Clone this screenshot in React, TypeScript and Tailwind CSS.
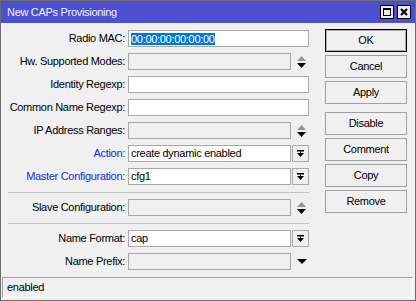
type Row = {
  label: string;
  blue?: boolean;
  value?: string;
  selected?: boolean;
  disabled?: boolean;
  tail?: "updown" | "drop" | "down";
};

const topRows: Row[] = [
  { label: "Radio MAC:", value: "00:00:00:00:00:00", selected: true },
  { label: "Hw. Supported Modes:", disabled: true, tail: "updown" },
  { label: "Identity Regexp:" },
  { label: "Common Name Regexp:" },
  { label: "IP Address Ranges:", disabled: true, tail: "updown" },
  { label: "Action:", blue: true, value: "create dynamic enabled", tail: "drop" },
  { label: "Master Configuration:", blue: true, value: "cfg1", tail: "drop" },
];

function UpDown() {
  return (
    <svg width="9" height="12" viewBox="0 0 9 12" className="ml-[6px]">
      <polygon points="4.5,0 9,5 0,5" fill="#8e988e" />
      <polygon points="0,7 9,7 4.5,12" fill="#000" />
    </svg>
  );
}

function DropButton() {
  return (
    <div className="ml-[1px] w-[17px] h-[17px] border border-[#a8a8a8] bg-[#f0f0f0] flex items-center justify-center">
      <svg width="7" height="7" viewBox="0 0 7 7">
        <rect x="0" y="0" width="7" height="1.5" fill="#000" />
        <rect x="3" y="1.5" width="1" height="1.5" fill="#000" />
        <polygon points="0,3 7,3 3.5,7" fill="#000" />
      </svg>
    </div>
  );
}

function FormRow({ row }: { row: Row }) {
  const short = !!row.tail;
  return (
    <div className="flex items-center h-[17px]">
      <div
        className={`w-[124px] text-right whitespace-nowrap ${row.blue ? "text-[#2424de]" : "text-black"}`}
      >
        {row.label}
      </div>
      <div
        className={`ml-[3px] h-[17px] border border-[#a8a8a8] px-[2px] flex items-center whitespace-nowrap overflow-hidden ${
          short ? "w-[163px]" : "w-[181px]"
        } ${row.disabled ? "bg-[#f0f0f0]" : "bg-white"}`}
      >
        {row.selected ? (
          <span className="bg-[#0078d7] text-white leading-[12px]">{row.value}</span>
        ) : (
          <span className="text-black">{row.value}</span>
        )}
      </div>
      {row.tail === "updown" && <UpDown />}
      {row.tail === "drop" && <DropButton />}
      {row.tail === "down" && (
        <svg width="10" height="5" viewBox="0 0 10 5" className="ml-[6px]">
          <polygon points="0,0 10,0 5,5" fill="#000" />
        </svg>
      )}
    </div>
  );
}

function Separator() {
  return <div className="ml-[7px] w-[301px] h-[2px] border-b border-[#c4c4c4]" />;
}

function Btn({ label, main, extra }: { label: string; main?: boolean; extra?: boolean }) {
  return (
    <div
      className={`w-[82px] h-[23px] flex items-center justify-center bg-[#f0f0f0] text-black ${
        main ? "border border-black shadow-[inset_0_0_0_1px_#b0b0b0]" : "border border-[#a0a0a0]"
      } ${extra ? "mt-[5px]" : ""}`}
    >
      {label}
    </div>
  );
}

export default function App() {
  return (
    <div className="w-[416px] h-[301px] bg-[#f0f0f0] border border-[#6e6e6e] flex flex-col font-['Liberation_Sans',Arial,sans-serif] text-[11px] tracking-[-0.3px] select-none">
      {/* Title bar */}
      <div className="h-[22px] bg-[#4b4fd0] flex items-center pl-[6px] pr-[4px]">
        <span className="text-[#f2f2ff]">New CAPs Provisioning</span>
        <div className="ml-auto flex gap-[3px]">
          <div className="w-[14px] h-[14px] bg-[#ececec] border border-black flex items-center justify-center">
            <svg width="8" height="8" viewBox="0 0 8 8">
              <rect x="0.5" y="0.5" width="7" height="7" fill="none" stroke="#000" />
              <rect x="0" y="0" width="8" height="2" fill="#000" />
            </svg>
          </div>
          <div className="w-[14px] h-[14px] bg-[#ececec] border border-black flex items-center justify-center">
            <svg width="8" height="8" viewBox="0 0 8 8">
              <path d="M1 1 L7 7 M7 1 L1 7" stroke="#000" strokeWidth="2" />
            </svg>
          </div>
        </div>
      </div>

      {/* Body */}
      <div className="flex-1 flex flex-col">
        <div className="flex pt-[6px]">
          <div className="w-[308px] pt-[1px] flex flex-col gap-[6px]">
            {topRows.map((r) => (
              <FormRow key={r.label} row={r} />
            ))}
            <Separator />
            <FormRow row={{ label: "Slave Configuration:", disabled: true, tail: "updown" }} />
            <Separator />
            <FormRow row={{ label: "Name Format:", value: "cap", tail: "drop" }} />
            <FormRow row={{ label: "Name Prefix:", disabled: true, tail: "down" }} />
          </div>
          <div className="ml-[16px] flex flex-col gap-[3px]">
            <Btn label="OK" main />
            <Btn label="Cancel" />
            <Btn label="Apply" />
            <Btn label="Disable" extra />
            <Btn label="Comment" />
            <Btn label="Copy" />
            <Btn label="Remove" />
          </div>
        </div>

        {/* Status bar */}
        <div className="mt-auto mb-[2px] ml-[1px] mr-[2px] h-[21px] border-t border-l border-[#a0a0a0] border-r-white border-b-white border-r border-b flex items-center pl-[4px] text-black">
          enabled
        </div>
      </div>
    </div>
  );
}
